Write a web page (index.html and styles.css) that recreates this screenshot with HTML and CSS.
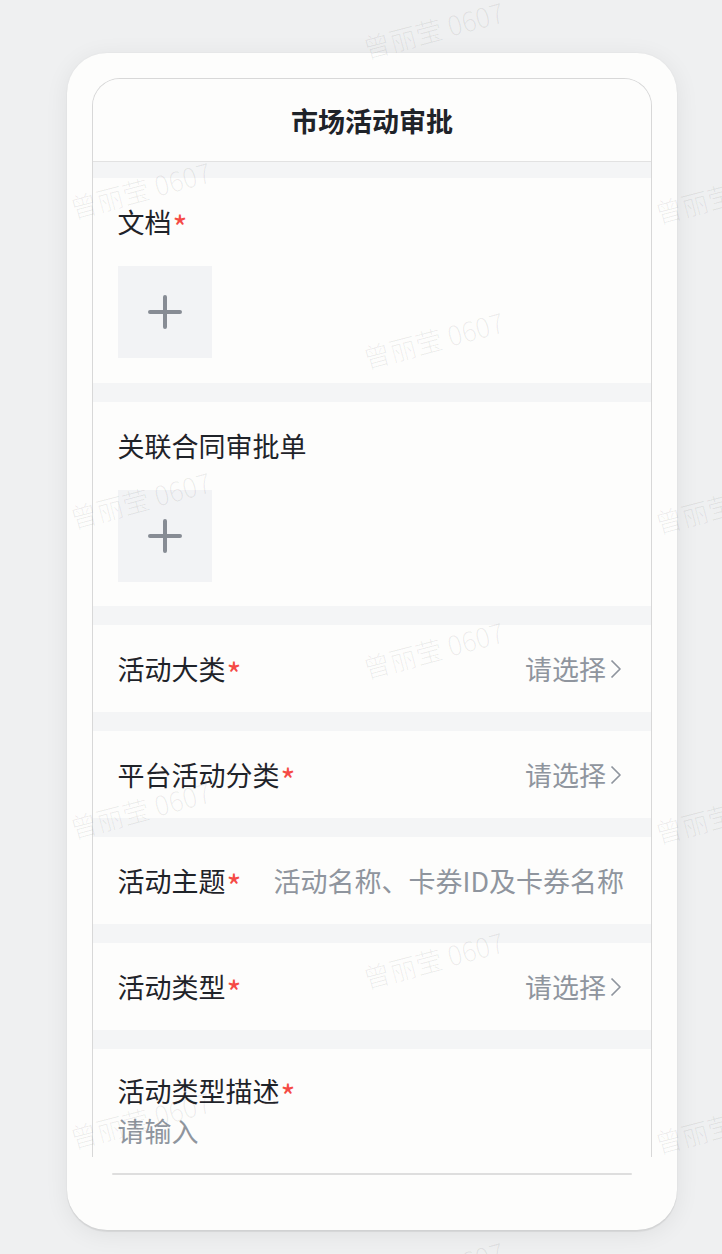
FILE: index.html
```html
<!DOCTYPE html>
<html lang="zh-CN">
<head>
<meta charset="utf-8">
<title>市场活动审批</title>
<link rel="stylesheet" href="styles.css">
</head>
<body>
<div class="stage">
  <div class="phone">
    <div class="screen">
      <div class="header">市场活动审批</div>

      <div class="section upload first">
        <div class="label">文档<span class="req">*</span></div>
        <div class="add-box">
          <svg width="34" height="34" viewBox="0 0 34 34"><path d="M17 2V32M2 17H32" stroke="#878c94" stroke-width="4" stroke-linecap="round" fill="none"/></svg>
        </div>
      </div>

      <div class="section upload">
        <div class="label">关联合同审批单</div>
        <div class="add-box">
          <svg width="34" height="34" viewBox="0 0 34 34"><path d="M17 2V32M2 17H32" stroke="#878c94" stroke-width="4" stroke-linecap="round" fill="none"/></svg>
        </div>
      </div>

      <div class="section row">
        <div class="label">活动大类<span class="req">*</span></div>
        <div class="value">请选择<svg class="chev" width="12" height="20" viewBox="0 0 12 20"><path d="M1.5 1.5L10 10L1.5 18.5" stroke="#8f959e" stroke-width="1.7" fill="none" stroke-linejoin="round"/></svg></div>
      </div>

      <div class="section row">
        <div class="label">平台活动分类<span class="req">*</span></div>
        <div class="value">请选择<svg class="chev" width="12" height="20" viewBox="0 0 12 20"><path d="M1.5 1.5L10 10L1.5 18.5" stroke="#8f959e" stroke-width="1.7" fill="none" stroke-linejoin="round"/></svg></div>
      </div>

      <div class="section row">
        <div class="label">活动主题<span class="req">*</span></div>
        <div class="value input">活动名称、卡券ID及卡券名称</div>
      </div>

      <div class="section row">
        <div class="label">活动类型<span class="req">*</span></div>
        <div class="value">请选择<svg class="chev" width="12" height="20" viewBox="0 0 12 20"><path d="M1.5 1.5L10 10L1.5 18.5" stroke="#8f959e" stroke-width="1.7" fill="none" stroke-linejoin="round"/></svg></div>
      </div>

      <div class="section textarea">
        <div class="label">活动类型描述<span class="req">*</span></div>
        <div class="placeholder">请输入</div>
      </div>
    </div>
    <div class="bottom-line"></div>
  </div>
</div>

<div class="watermarks">
  <span class="wm" style="left:361px;top:13px">曾丽莹 0607</span>
  <span class="wm" style="left:361px;top:323px">曾丽莹 0607</span>
  <span class="wm" style="left:361px;top:633px">曾丽莹 0607</span>
  <span class="wm" style="left:361px;top:943px">曾丽莹 0607</span>
  <span class="wm" style="left:361px;top:1253px">曾丽莹 0607</span>
  <span class="wm" style="left:68px;top:173px">曾丽莹 0607</span>
  <span class="wm" style="left:68px;top:483px">曾丽莹 0607</span>
  <span class="wm" style="left:68px;top:793px">曾丽莹 0607</span>
  <span class="wm" style="left:68px;top:1103px">曾丽莹 0607</span>
  <span class="wm" style="left:653px;top:178px">曾丽莹 0607</span>
  <span class="wm" style="left:653px;top:488px">曾丽莹 0607</span>
  <span class="wm" style="left:653px;top:798px">曾丽莹 0607</span>
  <span class="wm" style="left:653px;top:1108px">曾丽莹 0607</span>
</div>
</body>
</html>
```

FILE: styles.css
```css
* { box-sizing: border-box; }

html, body {
  margin: 0;
  padding: 0;
}

body {
  width: 722px;
  height: 1254px;
  overflow: hidden;
  background: #eff0f1;
  font-family: "Noto Sans CJK SC", "Noto Sans", sans-serif;
  position: relative;
}

.stage {
  padding: 53px 0 0 67px;
}

.phone {
  width: 610px;
  height: 1177px;
  background: #fdfdfc;
  border-radius: 40px;
  padding: 25px 25px 0 25px;
  box-shadow: 0 2px 1px rgba(0, 0, 0, 0.07), 0 0 2px rgba(0, 0, 0, 0.05), 0 4px 24px rgba(0, 0, 0, 0.07);
}

.screen {
  width: 560px;
  height: 1079px;
  border: 1.5px solid #d8d8d8;
  border-bottom: none;
  border-radius: 28px 28px 0 0;
  background: #f4f5f6;
  overflow: hidden;
  display: flex;
  flex-direction: column;
}

.header {
  flex: none;
  height: 83px;
  background: #fdfdfc;
  border-bottom: 1px solid #e2e2e2;
  display: flex;
  align-items: center;
  justify-content: center;
  font-size: 27px;
  font-weight: 700;
  color: #1f2329;
  padding-top: 1px;
}

.section {
  flex: none;
  background: #fdfdfc;
  margin-top: 19px;
  padding: 0 29px 0 24.5px;
}

.section.first {
  margin-top: 16px;
}

.label {
  font-size: 27px;
  line-height: 40px;
  color: #1f2329;
  white-space: nowrap;
}

.req {
  color: #f54a45;
  display: inline-block;
  font-size: 32px;
  line-height: 40px;
  vertical-align: top;
  position: relative;
  top: 4px;
  margin-left: 1px;
}

.upload {
  padding-top: 24px;
  padding-bottom: 24px;
}

.upload.first {
  padding-bottom: 25px;
}

.add-box {
  margin-top: 24px;
  width: 94px;
  height: 92px;
  background: #f2f3f5;
  display: flex;
  align-items: center;
  justify-content: center;
}

.row {
  height: 87px;
  display: flex;
  align-items: center;
  justify-content: space-between;
}

.value {
  font-size: 27px;
  line-height: 40px;
  color: #8f959e;
  display: flex;
  align-items: center;
  white-space: nowrap;
}

.chev {
  margin-left: 4px;
}

.value.input {
  margin-left: 24px;
  position: relative;
  left: 2px;
}

.textarea {
  padding-top: 22px;
  flex: 1;
}

.placeholder {
  font-size: 27px;
  line-height: 40px;
  color: #8f959e;
}

.bottom-line {
  width: 520px;
  height: 2px;
  margin: 16px 0 0 20px;
  background: #dedede;
  border-radius: 1px;
}

.watermarks {
  position: absolute;
  inset: 0;
  pointer-events: none;
  overflow: hidden;
}

.wm {
  position: absolute;
  width: 152px;
  height: 32px;
  line-height: 32px;
  font-size: 27px;
  white-space: nowrap;
  color: rgba(0, 0, 0, 0.065);
  font-family: "Noto Sans CJK SC", "Liberation Sans", sans-serif;
  font-weight: 300;
  transform: rotate(-15deg);
  transform-origin: center;
}
```
